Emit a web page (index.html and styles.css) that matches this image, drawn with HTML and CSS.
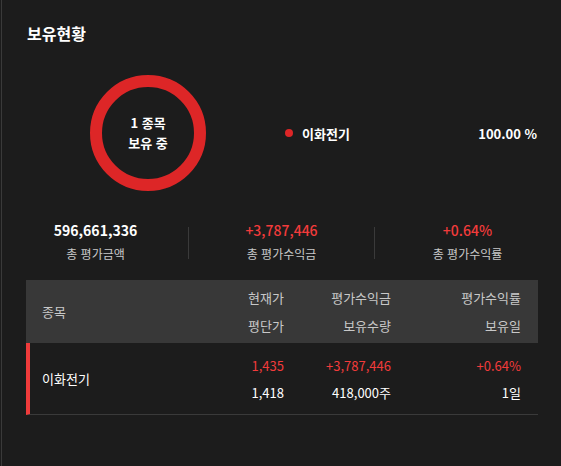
FILE: index.html
```html
<!DOCTYPE html>
<html lang="ko">
<head>
<meta charset="utf-8">
<link rel="stylesheet" href="styles.css">
</head>
<body>
<div class="panel">
  <h2 class="title">보유현황</h2>
  <div class="chart-row">
    <div class="donut">
      <svg class="ring" width="116" height="116" viewBox="0 0 116 116">
        <circle cx="58" cy="58" r="52" fill="none" stroke="#dd2627" stroke-width="12"/>
      </svg>
      <div class="donut-text">1 종목<br>보유 중</div>
    </div>
    <div class="legend">
      <span class="dot"></span>
      <span class="legend-name">이화전기</span>
      <span class="legend-pct">100.00 %</span>
    </div>
  </div>
  <div class="stats">
    <div class="stat">
      <div class="stat-value">596,661,336</div>
      <div class="stat-label">총 평가금액</div>
    </div>
    <div class="divider"></div>
    <div class="stat">
      <div class="stat-value up">+3,787,446</div>
      <div class="stat-label">총 평가수익금</div>
    </div>
    <div class="divider"></div>
    <div class="stat">
      <div class="stat-value up">+0.64%</div>
      <div class="stat-label">총 평가수익률</div>
    </div>
  </div>
  <div class="table">
    <div class="thead">
      <div class="cell name">종목</div>
      <div class="cell num"><span>현재가</span><span>평단가</span></div>
      <div class="cell num"><span>평가수익금</span><span>보유수량</span></div>
      <div class="cell num"><span>평가수익률</span><span>보유일</span></div>
    </div>
    <div class="trow">
      <div class="cell name">이화전기</div>
      <div class="cell num"><span class="up">1,435</span><span>1,418</span></div>
      <div class="cell num"><span class="up">+3,787,446</span><span>418,000주</span></div>
      <div class="cell num"><span class="up">+0.64%</span><span>1일</span></div>
    </div>
  </div>
</div>
</body>
</html>
```
FILE: styles.css
```css
html, body {
  margin: 0;
  padding: 0;
  background: #1c1c1c;
}
body {
  font-family: "Noto Sans CJK KR", "Noto Sans", sans-serif;
  color: #ffffff;
  height: 466px;
  overflow: hidden;
}
.panel {
  margin-left: 1px;
  border-left: 1px solid #3a3a3a;
  height: 466px;
  box-sizing: border-box;
  padding: 20px 23px 0 24px;
}
.title {
  margin: 0 0 0 1px;
  font-size: 16px;
  line-height: 26px;
  font-weight: 700;
}
.chart-row {
  display: flex;
  align-items: center;
  margin-top: 29px;
  height: 116px;
}
.donut {
  position: relative;
  width: 116px;
  height: 116px;
  margin-left: 64px;
}
.ring {
  display: block;
}
.donut-text {
  position: absolute;
  inset: 0;
  display: flex;
  align-items: center;
  justify-content: center;
  text-align: center;
  font-size: 13px;
  font-weight: 700;
  line-height: 20px;
}
.legend {
  flex: 1;
  display: flex;
  align-items: center;
  margin-left: 79px;
  font-size: 13px;
  font-weight: 700;
}
.dot {
  width: 8px;
  height: 8px;
  border-radius: 50%;
  background: #dd2627;
  margin-right: 9px;
}
.legend-name {
  flex: 1;
}
.legend-pct {
  margin-right: 1px;
}
.stats {
  display: flex;
  align-items: center;
  margin: 28px -23px 0 -23px;
}
.stat {
  width: 185px;
  text-align: center;
}
.divider {
  width: 1px;
  height: 32px;
  margin-top: 1px;
  background: #3a3a3a;
}
.stat-value {
  font-size: 14px;
  font-weight: 700;
  line-height: 22px;
}
.stat-label {
  font-size: 12px;
  line-height: 22px;
  color: #c8c8c8;
  margin-top: 2px;
}
.up {
  color: #f23b3b;
}
.stat-value.up {
  font-weight: 500;
}
.table {
  margin-top: 15px;
  font-size: 13px;
}
.thead, .trow {
  display: grid;
  grid-template-columns: 1fr 100px 107px 130px;
  padding: 0 17px 0 16px;
  align-items: center;
}
.thead {
  background: #383838;
  color: #c8c8c8;
  height: 63px;
}
.trow {
  height: 71px;
  border-left: 4px solid #ef3b3b;
  padding-left: 12px;
  border-bottom: 1px solid #3a3a3a;
}
.cell.num {
  display: flex;
  flex-direction: column;
  align-items: flex-end;
}
.thead .cell.num {
  line-height: 28px;
}
.trow .cell.num {
  line-height: 27px;
}
.trow .name {
  color: #fff;
}
```
